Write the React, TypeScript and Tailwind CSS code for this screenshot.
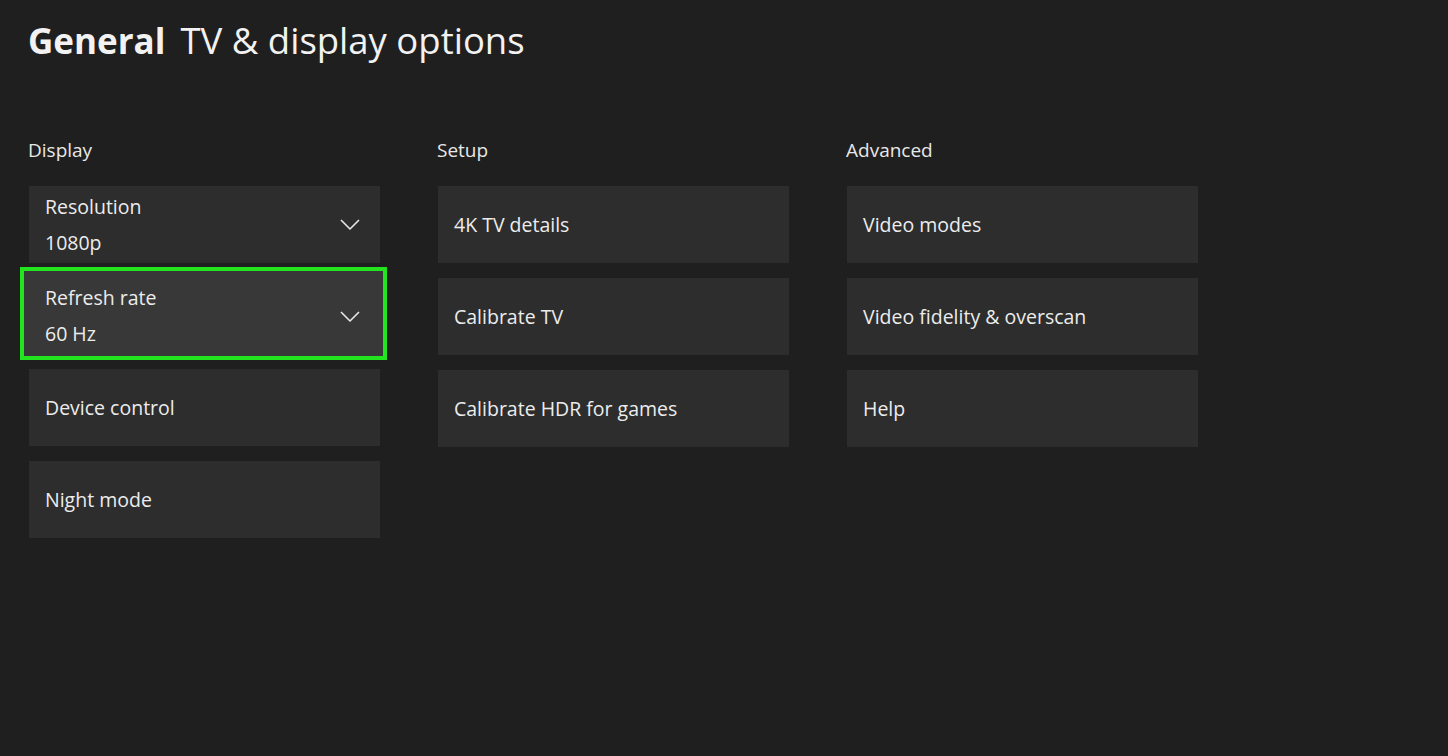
type Tile = {
  label: string;
  value?: string;
  focused?: boolean;
};

const columns: { title: string; tiles: Tile[] }[] = [
  {
    title: 'Display',
    tiles: [
      { label: 'Resolution', value: '1080p' },
      { label: 'Refresh rate', value: '60 Hz', focused: true },
      { label: 'Device control' },
      { label: 'Night mode' },
    ],
  },
  {
    title: 'Setup',
    tiles: [{ label: '4K TV details' }, { label: 'Calibrate TV' }, { label: 'Calibrate HDR for games' }],
  },
  {
    title: 'Advanced',
    tiles: [{ label: 'Video modes' }, { label: 'Video fidelity & overscan' }, { label: 'Help' }],
  },
];

function Chevron() {
  return (
    <svg width="20" height="11" viewBox="0 0 20 11" fill="none" className="text-[#e6e6e6]">
      <polyline points="1,1 10,10 19,1" stroke="currentColor" strokeWidth="1.6" strokeLinejoin="round" />
    </svg>
  );
}

function TwoLine({ tile }: { tile: Tile }) {
  return (
    <div className="flex flex-col">
      <span className="text-[19.5px] leading-[36px] text-[#ececec]">{tile.label}</span>
      <span className="text-[19.5px] leading-[36px] text-[#ececec]">{tile.value}</span>
    </div>
  );
}

function SettingTile({ tile }: { tile: Tile }) {
  if (tile.focused) {
    // focused tile grows a little and gets the green focus ring
    return (
      <div className="-ml-[9px] -mr-[7px] -mt-[11px] -mb-[6px] h-[93px] border-[4px] border-[#22e41f] bg-[#383838] pl-[21px] pr-[23px] pt-[5px] flex items-center justify-between">
        <TwoLine tile={tile} />
        <Chevron />
      </div>
    );
  }

  return (
    <div className="h-[77px] bg-[#2d2d2d] pl-[16px] pr-[20px] flex items-center justify-between">
      {tile.value ? <TwoLine tile={tile} /> : <span className="text-[19.5px] text-[#ececec]">{tile.label}</span>}
      {tile.value && <Chevron />}
    </div>
  );
}

export default function App() {
  return (
    <div
      className="min-h-screen w-full bg-[#1f1f1f] pl-[29px] pt-[16px]"
      style={{ fontFamily: '"Open Sans", "Noto Sans", sans-serif' }}
    >
      <h1 className="-ml-px text-[#f2f2f2] flex items-baseline gap-[15px] leading-[48px]">
        <span className="text-[35px] font-bold">General</span>
        <span className="text-[36.5px]">TV &amp; display options</span>
      </h1>

      <div className="mt-[73px] flex gap-[58px]">
        {columns.map(col => (
          <div key={col.title} className="w-[351px] flex flex-col">
            <h2 className="-ml-px text-[19px] leading-[24px] text-[#e8e8e8]">{col.title}</h2>
            <div className="mt-[24px] flex flex-col gap-[15px]">
              {col.tiles.map(t => (
                <SettingTile key={t.label} tile={t} />
              ))}
            </div>
          </div>
        ))}
      </div>
    </div>
  );
}
